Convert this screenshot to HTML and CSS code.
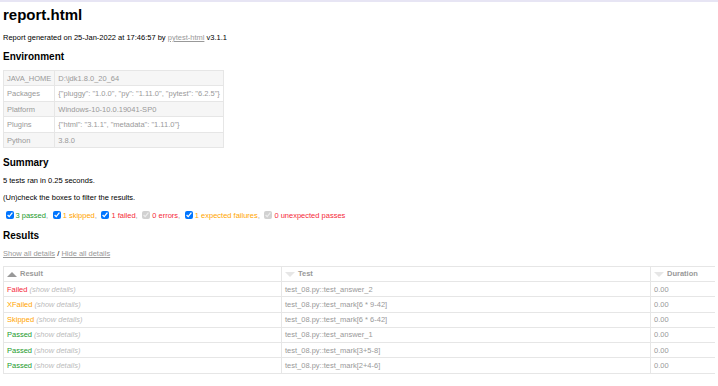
FILE: index.html
```html
<!DOCTYPE html>
<html lang="en">
<head>
    <meta charset="utf-8">
    <title>Test Report</title>
    <link rel="stylesheet" href="styles.css">
</head>
<body>
    <h1>report.html</h1>
    <p>Report generated on 25-Jan-2022 at 17:46:57 by <a href="#">pytest-html</a> v3.1.1</p>

    <h2>Environment</h2>
    <table class="environment">
        <tr><td>JAVA_HOME</td><td>D:\jdk1.8.0_20_64</td></tr>
        <tr><td>Packages</td><td>{"pluggy": "1.0.0", "py": "1.11.0", "pytest": "6.2.5"}</td></tr>
        <tr><td>Platform</td><td>Windows-10-10.0.19041-SP0</td></tr>
        <tr><td>Plugins</td><td>{"html": "3.1.1", "metadata": "1.11.0"}</td></tr>
        <tr><td>Python</td><td>3.8.0</td></tr>
    </table>

    <h2>Summary</h2>
    <p>5 tests ran in 0.25 seconds. </p>
    <p class="filter">(Un)check the boxes to filter the results.</p>
    <div class="filters">
        <input checked class="filter" type="checkbox"><span class="passed">3 passed</span>,
        <input checked class="filter" type="checkbox"><span class="skipped">1 skipped</span>,
        <input checked class="filter" type="checkbox"><span class="failed">1 failed</span>,
        <input checked class="filter" disabled type="checkbox"><span class="error">0 errors</span>,
        <input checked class="filter" type="checkbox"><span class="xfailed">1 expected failures</span>,
        <input checked class="filter" disabled type="checkbox"><span class="xpassed">0 unexpected passes</span>
    </div>

    <h2>Results</h2>
    <p><a href="#" class="show-all">Show all details</a> / <a href="#" class="hide-all">Hide all details</a></p>

    <table class="results-table">
        <colgroup>
            <col class="col-w-result">
            <col class="col-w-name">
            <col>
        </colgroup>
        <thead>
            <tr>
                <th class="sortable asc active"><div class="sort-icon"></div>Result</th>
                <th class="sortable inactive"><div class="sort-icon"></div>Test</th>
                <th class="sortable inactive"><div class="sort-icon"></div>Duration</th>
            </tr>
        </thead>
        <tbody class="failed results-table-row">
            <tr><td class="col-result"><span class="expander">Failed</span></td><td>test_08.py::test_answer_2</td><td>0.00</td></tr>
        </tbody>
        <tbody class="xfailed results-table-row">
            <tr><td class="col-result"><span class="expander">XFailed</span></td><td>test_08.py::test_mark[6 * 9-42]</td><td>0.00</td></tr>
        </tbody>
        <tbody class="skipped results-table-row">
            <tr><td class="col-result"><span class="expander">Skipped</span></td><td>test_08.py::test_mark[6 * 6-42]</td><td>0.00</td></tr>
        </tbody>
        <tbody class="passed results-table-row">
            <tr><td class="col-result"><span class="expander">Passed</span></td><td>test_08.py::test_answer_1</td><td>0.00</td></tr>
        </tbody>
        <tbody class="passed results-table-row">
            <tr><td class="col-result"><span class="expander">Passed</span></td><td>test_08.py::test_mark[3+5-8]</td><td>0.00</td></tr>
        </tbody>
        <tbody class="passed results-table-row">
            <tr><td class="col-result"><span class="expander">Passed</span></td><td>test_08.py::test_mark[2+4-6]</td><td>0.00</td></tr>
        </tbody>
    </table>
</body>
</html>
```

FILE: styles.css
```css
html {
    border-top: 2px solid #e7e5f4;
    overflow: hidden;
}

body {
    font-family: "Liberation Sans", Helvetica, Arial, sans-serif;
    font-size: 7.5px;
    margin: 0 3px;
    color: #999;
}

h1 {
    font-size: 15px;
    margin: 4px 0 10px;
    color: black;
}

h2 {
    font-size: 10px;
    margin: 8.9px 0 8px;
    color: black;
}

p {
    margin: 7.5px 0;
    color: black;
}

a {
    color: #999;
}

table {
    border-collapse: collapse;
}

/* environment */

.environment td {
    padding: 2.75px 3px;
    border: 1px solid #e6e6e6;
}

.environment tr:nth-child(odd) {
    background-color: #f6f6f6;
}

/* summary filters */

.filters {
    margin: 0;
}

.filters input {
    width: 8px;
    height: 8px;
    margin: 2px 2px 2px 2.5px;
    vertical-align: -1px;
}

span.passed, .passed .col-result {
    color: #1b9a2c;
}

span.skipped, span.xfailed, .skipped .col-result, .xfailed .col-result {
    color: orange;
}

span.error, span.failed, span.xpassed, .failed .col-result {
    color: #f52a3a;
}

/* results */

.results-table {
    border: 1px solid #e6e6e6;
    color: #999;
    font-size: 7.5px;
    width: 800px;
    table-layout: fixed;
}

.col-w-result {
    width: 278px;
}

.col-w-name {
    width: 369px;
}

.results-table th,
.results-table td {
    padding: 2.65px 3px;
    border: 1px solid #e6e6e6;
    text-align: left;
    white-space: nowrap;
}

.results-table th {
    font-weight: bold;
}

.results-table tbody.skipped + tbody.passed td {
    border-top-color: #d9d9d9;
}

.expander:after {
    content: " (show details)";
    color: #bbb;
    font-style: italic;
}

.sort-icon {
    float: left;
    margin-right: 3px;
    margin-top: 3px;
    width: 0;
    height: 0;
    border-left: 5px solid transparent;
    border-right: 5px solid transparent;
}

.inactive .sort-icon {
    border-top: 5px solid #e6e6e6;
}

.asc.active .sort-icon {
    border-bottom: 5px solid #999;
}
```
